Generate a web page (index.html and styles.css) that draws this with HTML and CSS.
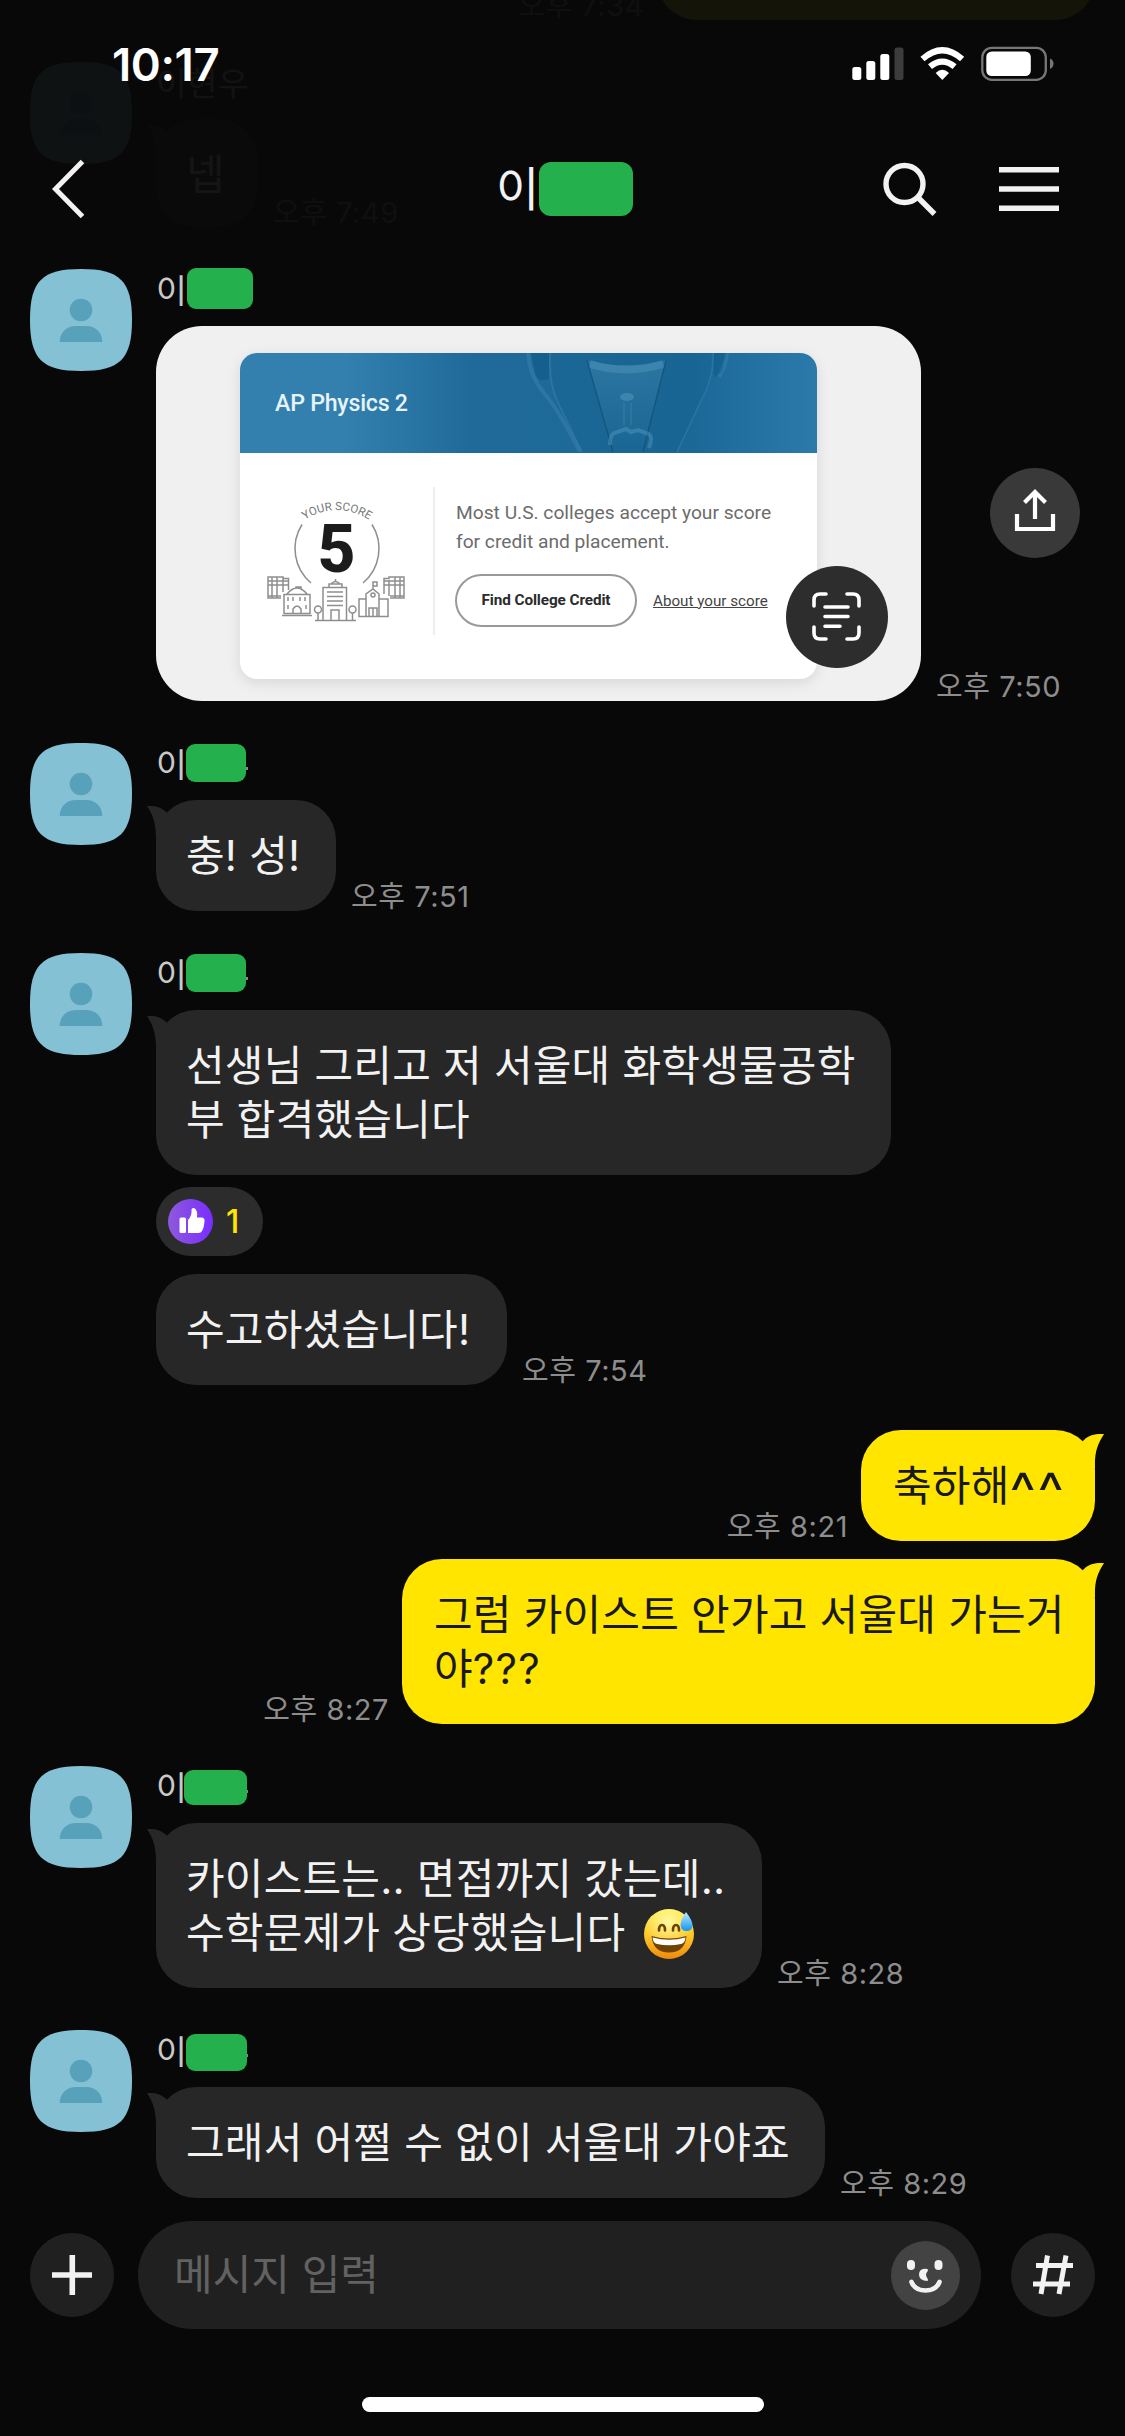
FILE: index.html
```html
<!DOCTYPE html>
<html lang="ko">
<head>
<meta charset="utf-8">
<title>채팅</title>
<link rel="stylesheet" href="styles.css">
</head>
<body>
<svg width="0" height="0" class="defs">
  <defs>
    <linearGradient id="face" x1="0" y1="0" x2="0" y2="1"><stop offset="0" stop-color="#ffe93a"/><stop offset=".55" stop-color="#fdc52a"/><stop offset="1" stop-color="#ee8a0c"/></linearGradient>
    <radialGradient id="glow" cx=".48" cy=".25" r=".5"><stop offset="0" stop-color="#fff9a0"/><stop offset="1" stop-color="#fff9a0" stop-opacity="0"/></radialGradient>
    <linearGradient id="drop" x1="0" y1="0" x2="0" y2="1"><stop offset="0" stop-color="#bdeaff"/><stop offset="1" stop-color="#1296f0"/></linearGradient>
    <linearGradient id="purple"><stop offset="0" stop-color="#8d59dc"/><stop offset="1" stop-color="#7a2dff"/></linearGradient>
    <linearGradient id="cone" x1="0" y1="0" x2="0" y2="1"><stop offset="0" stop-color="#4289b2" stop-opacity=".45"/><stop offset="1" stop-color="#4289b2" stop-opacity="0"/></linearGradient>
    <symbol id="avatar" viewBox="0 0 102 102">
      <path fill="#84c1d5" d="M0 51C0 12 12 0 51 0S102 12 102 51 90 102 51 102 0 90 0 51Z"/>
      <circle cx="51" cy="41" r="11.3" fill="#57a1bb"/>
      <path fill="#57a1bb" d="M29.700 73C29.700 63 37 57 46 57H56C65 57 72.300 63 72.300 73Z"/>
    </symbol>
    <symbol id="tail-in" viewBox="0 0 24 34"><path fill="#272727" d="M0 .3C8-.8 15 1.500 20 7L24 12 22 34H9C9.400 20 6 8 0 .3Z"/></symbol>
    <symbol id="tail-out" viewBox="0 0 24 34"><path fill="#ffe500" d="M24 0C14-.5 8 1.500 3 7L0 12 2 34H15C14.500 19 17 11 24 0Z"/></symbol>
  </defs>
</svg>
<div class="screen">
  <main class="chat">
    <div class="row out">
      <span class="time">오후 7:34</span>
      <div class="bubble w429"></div>
    </div>

    <section class="group ghost">
      <svg class="avatar"><use href="#avatar"/></svg>
      <div class="body">
        <div class="name">이현우</div>
        <div class="row"><div class="bubble w102"><svg class="tail"><use href="#tail-in"/></svg>넵</div><span class="time">오후 7:49</span></div>
      </div>
    </section>

    <section class="group">
      <svg class="avatar"><use href="#avatar"/></svg>
      <div class="body">
        <div class="name">이<i class="mask m1"></i></div>
        <div class="row">
          <div class="photo">
            <div class="card">
              <div class="card-head">
                <svg class="glass" viewBox="0 0 300 99" fill="none">
                  <path fill="#0c5584" opacity=".5" d="M13 0H31L31 26Q20 30 17 20ZM196 0H209L204 20 196 24Z"/>
                  <path fill="#105886" opacity=".2" d="M34 0H198Q196 30 182 50L159 99H64Q52 70 42 50T34 0Z"/>
                  <path stroke="#5a9cc4" stroke-width="4" opacity=".25" d="M10 0Q12 24 26 40T62 99M209 0Q207 14 201 24"/>
                  <path stroke="#4a90ba" stroke-width="1.500" opacity=".35" d="M32 0Q30 32 42 54L64 99M195 0Q196 26 182 50L159 99"/>
                  <path fill="url(#cone)" d="M69 7Q108 18 148 7L125 99H95Z"/>
                  <path stroke="#5fa4c9" stroke-width="8" opacity=".35" d="M72 11Q108 22 145 11"/>
                  <path stroke="#0a456c" stroke-width="1.300" opacity=".55" d="M69 7 95 99M148 7 125 99"/>
                  <path stroke="#66a9cc" stroke-width="4" opacity=".35" d="M92 92Q92 82 96 80L108 76 113 79 120 77 131 81Q135 84 131 95"/>
                  <path stroke="#5c9fc4" stroke-width="1.500" opacity=".25" d="M106 50V72M113 50V72"/>
                  <ellipse cx="109" cy="44" rx="7" ry="4" fill="#62a4c8" opacity=".4"/>
                </svg>
                <span class="card-title">AP Physics 2</span>
              </div>
              <div class="card-body">
                <svg class="score" viewBox="0 0 140 130" fill="none" stroke="#8e8e8e">
                  <path id="arc" stroke="none" d="M37 24.500A58 58 0 0 1 103 24.500"/>
                  <text class="arc-text"><textPath href="#arc" startOffset="50%" text-anchor="middle">YOUR SCORE</textPath></text>
                  <path stroke-width="1.500" d="M35 28.500A45 45 0 0 0 44 87M105 28.500A45 45 0 0 1 96 87"/>
                  <text x="69.500" y="76" class="five" text-anchor="middle">5</text>
                  <g stroke-width="1.500">
                    <path d="M56 124V91.500H79.500V124M48 124.500H89M62 91V88H75V91M64 88Q68.500 83 73 88M68.500 86V83M60 96H76M60 100.500H76M60 105H76M60 109.500H76M64 124V114H72V124"/>
                    <path d="M51 124V117M85.500 124V117"/><circle cx="51" cy="113.500" r="3.500"/><circle cx="85.500" cy="113.500" r="3.500"/>
                    <path d="M17 118V98.500H43V118M15 119.500H45M17 117.500H43M20 98Q30 86 40 98M29 93V91H34V94M26 118V113Q30 107 34 113V118M21 101V105M26 101V105M33 101V105M38 101V105M21 109V113M39 109V113"/>
                    <path d="M99 103H92V120.500H121V103H112M99 120V98L106 93 112 98V120M106 93V86H110V90H106M102 120V112H110V120M106 112V120"/><circle cx="106" cy="99" r="2"/>
                    <path d="M14 102H1V81H16V82.500H21.500V94M1 85H21M1 89H21M5 81V102M10 81V102M16 82V96M1 100H14M123 102H137V81H122V82.500H117V98M117 85H137M117 89H137M122 84V100M128 81V102M133 81V102M123 100H137"/>
                  </g>
                </svg>
                <div class="credit">
                  <p class="accept">Most U.S. colleges accept your score<br>for credit and placement.</p>
                  <div class="actions"><span class="find">Find College Credit</span><span class="about">About your score</span></div>
                </div>
              </div>
            </div>
            <div class="scan">
              <svg viewBox="0 0 102 102" width="102" height="102" fill="none" stroke="#fff" stroke-width="3.600" stroke-linecap="round">
                <path d="M28 40V34Q28 28 34 28H40M61 28H67Q73 28 73 34V40M73 61V67Q73 73 67 73H61M40 73H34Q28 73 28 67V61M39 41H62M39 50.500H62M39 60.300H54"/>
              </svg>
            </div>
          </div>
          <span class="time">오후 7:50</span>
          <div class="share">
            <svg viewBox="0 0 90 90" width="90" height="90" fill="none" stroke="#fff" stroke-width="4.200"><path d="M27 46V61H63V46M45 51V24M34.500 34.500 45 24 55.500 34.500"/></svg>
          </div>
        </div>
      </div>
    </section>

    <section class="group">
      <svg class="avatar"><use href="#avatar"/></svg>
      <div class="body">
        <div class="name">이<i class="mask m2"></i></div>
        <div class="row"><div class="bubble w180"><svg class="tail"><use href="#tail-in"/></svg>충! 성!</div><span class="time">오후 7:51</span></div>
      </div>
    </section>

    <section class="group">
      <svg class="avatar"><use href="#avatar"/></svg>
      <div class="body">
        <div class="name">이<i class="mask m2"></i></div>
        <div class="row"><div class="bubble w735"><svg class="tail"><use href="#tail-in"/></svg>선생님 그리고 저 서울대 화학생물공학<br>부 합격했습니다</div></div>
        <div class="reaction">
          <svg viewBox="0 0 45 45" width="45" height="45"><circle cx="22.500" cy="22.500" r="22.500" fill="url(#purple)"/><path fill="#fff" d="M13 18.500H16.500Q18 18.500 18 20V32.500Q18 34 16.500 34H13Q11.500 34 11.500 32.500V20Q11.500 18.500 13 18.500ZM20 21Q24 17 23.500 10.500 24 8.500 26 9 30 10.500 29 18.500H34Q37 19 36.500 22 36 29 34 32 33 34 30.500 34H20Z"/></svg>
          <span>1</span>
        </div>
        <div class="row"><div class="bubble w351">수고하셨습니다!</div><span class="time">오후 7:54</span></div>
      </div>
    </section>

    <div class="row out first">
      <span class="time">오후 8:21</span>
      <div class="bubble w234"><svg class="tail"><use href="#tail-out"/></svg>축하해<span class="caret">^^</span></div>
    </div>
    <div class="row out next">
      <span class="time">오후 8:27</span>
      <div class="bubble w693"><svg class="tail"><use href="#tail-out"/></svg>그럼 카이스트 안가고 서울대 가는거<br>야<span class="ask">???</span></div>
    </div>

    <section class="group">
      <svg class="avatar"><use href="#avatar"/></svg>
      <div class="body">
        <div class="name">이<i class="mask m3"></i></div>
        <div class="row"><div class="bubble w606"><svg class="tail"><use href="#tail-in"/></svg>카이스트는.. 면접까지 갔는데..<br>수학문제가 상당했습니다 <svg class="emoji" viewBox="0 0 52 52">
          <circle cx="26" cy="27" r="25" fill="url(#face)"/><circle cx="26" cy="27" r="25" fill="url(#glow)"/>
          <path d="M16 23.500Q16 18 19 18T22 23.500M30 23.500Q30 18 33 18T36 23.500" fill="none" stroke="#6b4200" stroke-width="2.600" stroke-linecap="round"/>
          <path fill="#704300" d="M8.500 29Q26 34 43.500 29 42 45.500 26 45.500T8.500 29Z"/><path fill="#fff" d="M9.500 30.500Q26 35 42.500 30.500 42 36 38 37 26 39.500 14 37 10 36 9.500 30.500Z"/>
          <path fill="url(#drop)" d="M43 5Q50 14 49.500 19 49 24 43.500 24 38 24 37.500 18 38 12 43 5Z"/>
        </svg></div><span class="time">오후 8:28</span></div>
      </div>
    </section>

    <section class="group">
      <svg class="avatar"><use href="#avatar"/></svg>
      <div class="body">
        <div class="name">이<i class="mask m4"></i></div>
        <div class="row"><div class="bubble w669"><svg class="tail"><use href="#tail-in"/></svg>그래서 어쩔 수 없이 서울대 가야죠</div><span class="time">오후 8:29</span></div>
      </div>
    </section>
  </main>

  <header class="top">
    <div class="status">
      <span class="clock">10:17</span>
      <svg viewBox="0 0 204 36" width="204" height="36">
        <g fill="#fff"><rect x="2.300" y="21" width="9" height="13" rx="2.500"/><rect x="16.300" y="15" width="9" height="19" rx="2.500"/><rect x="30.300" y="8" width="9" height="26" rx="2.500"/></g>
        <rect x="44.500" y="1.500" width="9" height="32.500" rx="2.500" fill="#3c3c3c"/>
        <g fill="none" stroke="#fff" stroke-width="6.200"><path d="M72.500 13Q92.300-4.500 112.100 13"/><path d="M80 20.700Q92.300 10.500 104.600 20.700"/></g>
        <path fill="#fff" d="M85.700 27Q92.300 20.500 99 27L92.300 34Z"/>
        <rect x="132.300" y="1.800" width="63.500" height="32" rx="9.500" fill="none" stroke="#777" stroke-width="2.300"/>
        <rect x="136.300" y="5.500" width="44.500" height="24.500" rx="5.500" fill="#fff"/><path fill="#777" d="M200 12.500Q203.500 14 203.500 17.500T200 23Z"/>
      </svg>
    </div>
    <nav class="nav">
      <svg class="back" viewBox="0 0 40 60" width="40" height="60" fill="none" stroke="#f2f2f2" stroke-width="5"><path d="M32.500 2.500 5.500 30 32.500 57.500"/></svg>
      <h1 class="title">이<i class="mask mt"></i></h1>
      <div class="tools">
        <svg viewBox="0 0 56 56" width="56" height="56" fill="none" stroke="#f2f2f2" stroke-width="5.400"><circle cx="23.500" cy="23" r="18.500"/><path d="M36.500 36 53.500 53"/></svg>
        <svg viewBox="0 0 60 46" width="60" height="46" fill="#f2f2f2"><path d="M0 1H60V6.500H0ZM0 20.200H60V25.700H0ZM0 39.500H60V45H0Z"/></svg>
      </div>
    </nav>
  </header>

  <footer class="composer">
    <div class="round"><svg viewBox="0 0 84 84" width="84" height="84" stroke="#f2f2f2" stroke-width="5.600"><path d="M22 42H62M42.300 22V62"/></svg></div>
    <div class="field">
      <span class="hint">메시지 입력</span>
      <svg viewBox="0 0 69 69" width="69" height="69" fill="none"><circle cx="34.500" cy="34.500" r="34.500" fill="#434343"/><rect x="16" y="19" width="8" height="10" rx="4" fill="#f2f2f2"/><rect x="43.500" y="19" width="8" height="10" rx="4" fill="#f2f2f2"/><path stroke="#f2f2f2" stroke-width="4.600" stroke-linecap="round" d="M20.500 41Q24 49.500 34.500 49.500T48.500 41"/><path fill="#f2f2f2" d="M36.500 28Q28 27 28 33.500T36.500 40Q37.500 39 36.500 37.500 33.500 33.500 36.500 30.500 37.500 29 36.500 28Z"/></svg>
    </div>
    <div class="round"><svg viewBox="0 0 84 84" width="84" height="84" stroke="#f2f2f2" stroke-width="5"><path d="M36.500 22.500 30 61M55 22.500 48 61M25 32.500H62M22 51H59"/></svg></div>
  </footer>
  <div class="home"></div>
</div>
</body>
</html>
```
FILE: styles.css
```css
* { box-sizing: border-box; }
body { margin: 0; background: #080808; font-family: Inter, "Noto Sans CJK KR", sans-serif; color: #f2f2f2; }
.defs { position: absolute; }
.screen { position: relative; width: 1125px; height: 2436px; overflow: hidden; display: flex; flex-direction: column; }

/* Conversation */
.chat { flex: none; height: 2198px; display: flex; flex-direction: column; justify-content: flex-end; padding: 0 30px; }
.group { display: flex; gap: 24px; margin-top: 42px; }
.avatar { width: 102px; height: 102px; flex: none; }
.name { height: 57px; display: flex; font-size: 33.500px; line-height: 45px; color: #c9c9c9; }
.mask { display: block; flex: none; background: #24b04d; border-radius: 9px; }
.m1 { width: 66px; height: 41px; margin: -1px 0 0 0; }
.m2 { width: 60px; height: 38px; margin: 1px 0 0 -1px; }
.m3 { width: 63px; height: 35px; margin: 4px 0 0 -3px; }
.m4 { width: 61px; height: 37px; margin: 4px 0 0 -1px; }
.m2::after, .m3::after, .m4::after { content: ""; display: block; width: 2px; height: 3px; margin: 23px 0 0 100%; background: #8a8a8a; }
.m3::after, .m4::after { width: 1px; margin-top: 20px; }
.row { display: flex; align-items: flex-end; }
.row.out { justify-content: flex-end; }
.first { margin-top: 45px; }
.next { margin-top: 18px; }
.bubble { position: relative; flex: none; min-height: 111px; padding: 29px 0 28px 30px; border-radius: 40px; background: #272727; font-size: 42px; line-height: 54px; letter-spacing: .2px; white-space: nowrap; }
.out .bubble { background: #ffe500; color: #191919; padding-left: 32px; }
.caret { display: inline-block; font-size: 56px; line-height: 40px; height: 40px; vertical-align: -11px; letter-spacing: 1.500px; }
.ask { letter-spacing: 1.200px; }
.tail { position: absolute; width: 24px; height: 34px; left: -9px; top: 6px; }
.out .tail { left: auto; right: -9px; top: 4px; }
.ghost .bubble { min-height: 0; height: 108px; }
.w102 { width: 102px; } .w180 { width: 180px; } .w234 { width: 234px; } .w351 { width: 351px; }
.w429 { width: 438px; } .w606 { width: 606px; } .w669 { width: 669px; } .w693 { width: 693px; } .w735 { width: 735px; }
.time { font-size: 29px; line-height: 28px; letter-spacing: .55px; color: #8d8d8d; margin: 0 13px 0 15px; white-space: nowrap; }
.emoji { width: 52px; height: 52px; margin: -10px 0 -10px 6px; vertical-align: -1px; }
.reaction { width: 107px; height: 69px; margin: 12px 0 18px; padding-left: 12px; border-radius: 35px; background: #2c2c2c; display: flex; align-items: center; gap: 13px; font-size: 32px; font-weight: 500; color: #ffe500; }

/* Shared picture */
.photo { position: relative; width: 765px; height: 375px; border-radius: 46px; background: #f0f0f0; padding: 27px 104px 22px 84px; }
.card { height: 326px; border-radius: 17px; background: #fff; box-shadow: 0 4px 14px #0000001a; overflow: hidden; font-family: Roboto, sans-serif; }
.card-head { position: relative; height: 100px; display: flex; align-items: center; padding-left: 35px; background: linear-gradient(90deg, #3380ae 0, #3380ae 18%, #1f6a99 40%, #1b6897 78%, #2b7aaa 100%); }
.glass { position: absolute; left: 278px; top: 0; width: 300px; height: 99px; }
.card-title { font-size: 23.200px; font-weight: 500; letter-spacing: -.25px; color: #e6f3fa; }
.card-body { display: flex; height: 226px; padding-top: 34px; }
.score { width: 140px; height: 130px; margin-left: 27px; margin-top: 9px; flex: none; }
.arc-text { font-size: 11.500px; fill: #777; stroke: none; }
.five { font-size: 66px; font-weight: 800; fill: #1c1c1c; stroke: none; }
.credit { margin-left: 26px; height: 148px; border-left: 2px solid #eee; padding: 11px 0 0 21px; }
.accept { margin: 0; font-size: 19.200px; line-height: 29px; color: #6c6c6c; white-space: nowrap; }
.actions { display: flex; align-items: center; gap: 16px; margin-top: 18px; white-space: nowrap; }
.find { width: 182px; height: 53px; margin-left: -1px; border: 2px solid #999; border-radius: 27px; text-align: center; line-height: 49px; font-size: 15.300px; font-weight: 700; color: #2b2b2b; letter-spacing: -.1px; }
.about { font-size: 15.200px; color: #444; text-decoration: underline; }
.scan { position: absolute; left: 630px; top: 240px; width: 102px; height: 102px; border-radius: 50%; background: #2d2d2d; }
.share { width: 90px; height: 90px; border-radius: 50%; background: #393939; margin: 0 0 143px -84px; }

/* Translucent bar over the scrolled messages */
.top { position: absolute; inset: 0 0 auto 0; height: 240px; background: rgba(8, 8, 8, .95); }
.status { height: 128px; display: flex; justify-content: space-between; align-items: center; padding: 0 71px 0 112px; }
.clock { font-size: 45.500px; font-weight: 600; color: #fff; letter-spacing: -.4px; }
.nav { height: 121px; display: grid; grid-template-columns: 446px 1fr auto; align-items: center; padding: 0 66px 0 50px; }
.title { margin: 0; display: flex; align-items: center; font-size: 47px; font-weight: 400; line-height: 60px; }
.mt { width: 94px; height: 54px; border-radius: 12px; }
.tools { display: flex; align-items: center; gap: 62px; }

/* Composer */
.composer { display: flex; align-items: center; justify-content: space-between; height: 108px; margin: 23px 30px 0; flex: none; }
.round { width: 84px; height: 84px; border-radius: 50%; background: #202020; }
.field { width: 843px; height: 108px; margin-left: -6px; border-radius: 54px; background: #202020; display: flex; align-items: center; justify-content: space-between; padding: 0 21px 0 36px; font-size: 42px; color: #626262; }
.hint { line-height: 54px; padding-bottom: 1px; }
.home { width: 402px; height: 15px; border-radius: 8px; background: #fff; margin: 68px auto 0; flex: none; }
```
